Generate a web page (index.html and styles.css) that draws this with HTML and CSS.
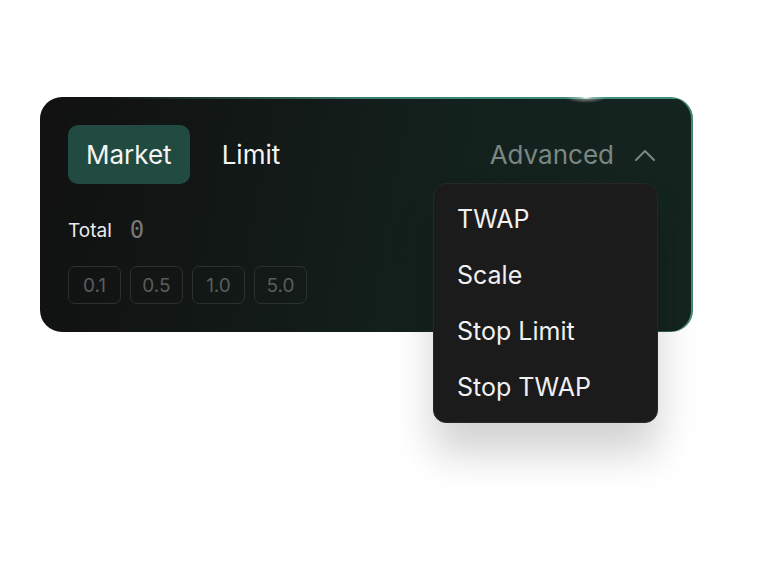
FILE: index.html
```html
<!DOCTYPE html>
<html lang="en">
<head>
  <meta charset="UTF-8" />
  <title>Order Type</title>
  <link rel="stylesheet" href="styles.css">
</head>
<body>
  <div class="page">
    <div class="order-card">
      <div class="glow"></div>
      <div class="tabs">
        <button class="tab active">Market</button>
        <button class="tab">Limit</button>
        <div class="advanced">
          Advanced
          <svg class="chevron" width="22" height="14" viewBox="0 0 22 14">
            <path d="M2 12 L11 3 L20 12" fill="none" stroke="currentColor" stroke-width="2" stroke-linecap="round" stroke-linejoin="round"/>
          </svg>
        </div>
      </div>

      <div class="total">
        <span class="total-label">Total</span>
        <span class="total-value">0</span>
      </div>

      <div class="chips">
        <span class="chip">0.1</span>
        <span class="chip">0.5</span>
        <span class="chip">1.0</span>
        <span class="chip">5.0</span>
      </div>

      <ul class="menu">
        <li>TWAP</li>
        <li>Scale</li>
        <li>Stop Limit</li>
        <li>Stop TWAP</li>
      </ul>
    </div>
  </div>
</body>
</html>
```

FILE: styles.css
```css
html, body {
  margin: 0;
  background: #fff;
  font-family: Inter, "Noto Sans", sans-serif;
}
.page {
  height: 564px;
  padding: 97px 0 0 40px;
  box-sizing: border-box;
}
.order-card {
  position: relative;
  width: 653px;
  height: 235px;
  box-sizing: border-box;
  padding: 28px 28px 0;
  border-radius: 22px;
  background:
    linear-gradient(90deg, rgba(63,138,120,0) 10%, rgba(63,138,120,0.9) 50%, #44907d 100%) top / 100% 2px no-repeat,
    linear-gradient(90deg, rgba(63,138,120,0) 55%, rgba(63,138,120,0.6) 100%) bottom / 100% 1px no-repeat,
    linear-gradient(100deg, #111111 0%, #121917 35%, #13211d 60%, #14241f 100%);
  box-shadow: inset -2px 0 0 #3f8a77;
}
.glow {
  position: absolute;
  top: -5px;
  left: 525px;
  width: 42px;
  height: 11px;
  border-radius: 50%;
  background: radial-gradient(ellipse at center, rgba(255,255,255,1) 0%, rgba(255,255,255,0.4) 22%, rgba(255,255,255,0) 70%);
}
.tabs {
  display: flex;
  align-items: center;
  gap: 32px;
}
.tab {
  height: 59px;
  padding: 0 18px;
  border: none;
  border-radius: 10px;
  background: transparent;
  color: #f4f4f4;
  font-family: inherit;
  font-size: 26px;
  cursor: pointer;
}
.tab.active {
  background: #214b40;
}
.tab + .tab {
  padding: 0;
}
.advanced {
  margin-left: auto;
  margin-right: 9px;
  display: flex;
  align-items: center;
  gap: 20px;
  color: #7b8784;
  font-size: 26px;
}
.total {
  display: flex;
  align-items: center;
  gap: 18px;
  margin-top: 32px;
}
.total-label {
  color: #ececec;
  font-size: 19px;
}
.total-value {
  color: #777;
  font-family: "DejaVu Sans Mono", monospace;
  font-size: 24px;
}
.chips {
  display: flex;
  gap: 9px;
  margin-top: 22px;
}
.chip {
  width: 53px;
  height: 38px;
  box-sizing: border-box;
  display: flex;
  align-items: center;
  justify-content: center;
  border: 1.5px solid #2e302f;
  border-radius: 7px;
  color: #5a5c5b;
  font-size: 19px;
}
.menu {
  position: absolute;
  left: 393px;
  top: 86px;
  width: 225px;
  margin: 0;
  padding: 7px 0;
  box-sizing: border-box;
  list-style: none;
  border-radius: 13px;
  background: #1b1b1b;
  border: 1px solid #262828;
  box-shadow: 0 30px 40px rgba(0, 0, 0, 0.18);
}
.menu li {
  height: 56px;
  display: flex;
  align-items: center;
  padding-left: 23px;
  color: #f0f0f0;
  font-size: 25px;
}
```
